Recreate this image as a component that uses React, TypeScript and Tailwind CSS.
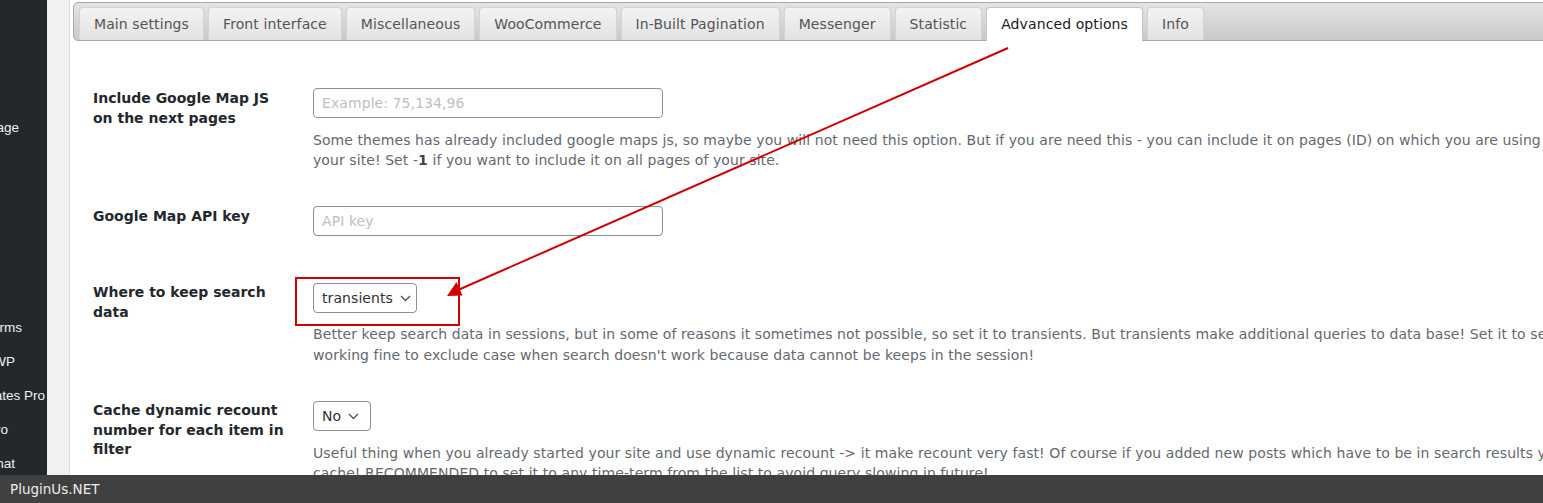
import React from "react";

const tabs = [
  "Main settings",
  "Front interface",
  "Miscellaneous",
  "WooCommerce",
  "In-Built Pagination",
  "Messenger",
  "Statistic",
  "Advanced options",
  "Info",
];

function Chevron() {
  return (
    <svg width="11" height="7" viewBox="0 0 11 7" className="ml-[7px] mt-[1px]">
      <polyline points="1,1 5.5,5.5 10,1" fill="none" stroke="#50575e" strokeWidth="1.4" />
    </svg>
  );
}

function SideItem({ text, pr }: { text: string; pr: string }) {
  return (
    <div className={`h-[34px] flex items-center justify-end overflow-hidden whitespace-nowrap text-[13.5px] font-['Liberation_Sans',sans-serif] text-[#f0f0f1] ${pr}`}>
      <span>{text}</span>
    </div>
  );
}

export default function App() {
  return (
    <div className="relative h-[503px] w-[1543px] overflow-hidden bg-white flex font-['DejaVu_Sans',sans-serif]">
      {/* sidebar */}
      <aside className="w-[47px] shrink-0 bg-[#23282d] flex flex-col pt-[111px]">
        <SideItem text="Manage" pr="pr-[28px]" />
        <div className="h-[166px]" />
        <SideItem text="Forms" pr="pr-[25px]" />
        <SideItem text="WP" pr="pr-[32px]" />
        <SideItem text="Templates Pro" pr="pr-[2px]" />
        <SideItem text="Pro" pr="pr-[39px]" />
        <SideItem text="Chat" pr="pr-[32px]" />
      </aside>
      <div className="w-[23px] shrink-0 bg-[#f1f1f1] border-r border-[#dcdcde]" />

      {/* main */}
      <main className="flex-1 min-w-0 overflow-hidden pt-[2px] pl-[3px] tracking-[0.08px]">
        <div className="h-[39px] mr-[-20px] border border-[#a9a9a9] rounded-[5px] bg-linear-to-b from-[#e4e4e4] to-[#c9c9c9] pl-[5px] flex items-end gap-[4px]">
          {tabs.map((t) =>
            t === "Advanced options" ? (
              <div
                key={t}
                className="relative z-10 h-[34px] mb-[-1px] px-[14px] flex items-center border border-b-0 border-[#c5c5c5] rounded-t-[4px] bg-white text-[14px] text-[#212121] whitespace-nowrap tracking-[0.1px]"
              >
                {t}
              </div>
            ) : (
              <div
                key={t}
                className="h-[33px] px-[14px] flex items-center border border-b-0 border-[#d3d3d3] rounded-t-[4px] bg-linear-to-b from-[#f3f3f3] to-[#e2e2e2] text-[14px] text-[#555555] whitespace-nowrap tracking-[0.1px]"
              >
                {t}
              </div>
            )
          )}
        </div>

        {/* form */}
        <div className="pl-[20px] pt-[47px] flex flex-col text-[14px]">
          {/* row 1 */}
          <div className="flex">
            <div className="w-[200px] mr-[20px] shrink-0 font-bold leading-[20px] text-[#23282d] tracking-normal">
              Include Google Map JS on the next pages
            </div>
            <div className="flex flex-col">
              <input
                className="w-[350px] h-[30px] border border-[#8c8f94] rounded-[4px] px-[8px] text-[14px] text-[#2c3338] placeholder:text-[#c0c0c0] outline-none"
                placeholder="Example: 75,134,96"
              />
              <div className="mt-[12px] leading-[20px] text-[#646970] whitespace-nowrap">
                Some themes has already included google maps js, so maybe you will not need this option. But if you are need this - you can include it on pages (ID) on which you are using
                <br />
                your site! Set -<b className="text-[#3c434a]">1</b> if you want to include it on all pages of your site.
              </div>
            </div>
          </div>

          {/* row 2 */}
          <div className="flex mt-[36px]">
            <div className="w-[200px] mr-[20px] shrink-0 font-bold leading-[20px] text-[#23282d] tracking-normal">
              Google Map API key
            </div>
            <input
              className="w-[350px] h-[30px] border border-[#8c8f94] rounded-[4px] px-[8px] text-[14px] text-[#2c3338] placeholder:text-[#c0c0c0] outline-none"
              placeholder="API key"
            />
          </div>

          {/* row 3 */}
          <div className="flex mt-[47px]">
            <div className="w-[200px] mr-[20px] shrink-0 font-bold leading-[19.5px] text-[#23282d] tracking-normal">
              Where to keep search data
            </div>
            <div className="flex flex-col">
              <div className="self-start h-[30px] w-[104px] border border-[#8c8f94] rounded-[4px] pl-[8px] flex items-center text-[#2c3338]">
                transients
                <Chevron />
              </div>
              <div className="mt-[11px] leading-[20.5px] text-[#646970] whitespace-nowrap">
                Better keep search data in sessions, but in some of reasons it sometimes not possible, so set it to transients. But transients make additional queries to data base! Set it to sessions if your server is
                <br />
                working fine to exclude case when search doesn't work because data cannot be keeps in the session!
              </div>
            </div>
          </div>

          {/* row 4 */}
          <div className="flex mt-[36px]">
            <div className="w-[200px] mr-[20px] shrink-0 font-bold leading-[19.5px] text-[#23282d] tracking-normal">
              Cache dynamic recount number for each item in filter
            </div>
            <div className="flex flex-col">
              <div className="self-start h-[30px] w-[58px] border border-[#8c8f94] rounded-[4px] pl-[8px] flex items-center text-[#2c3338]">
                No
                <Chevron />
              </div>
              <div className="mt-[12px] leading-[20px] text-[#646970] whitespace-nowrap">
                Useful thing when you already started your site and use dynamic recount -&gt; it make recount very fast! Of course if you added new posts which have to be in search results you
                <br />
                cache! RECOMMENDED to set it to any time-term from the list to avoid query slowing in future!
              </div>
            </div>
          </div>
        </div>
      </main>

      {/* annotation overlay */}
      <div className="absolute left-[295px] top-[277px] w-[165px] h-[49px] border-2 border-[#d20000] pointer-events-none" />
      <svg className="absolute left-0 top-0 pointer-events-none" width="1543" height="503">
        <line x1="1008" y1="48" x2="458" y2="290" stroke="#d20000" strokeWidth="2" />
        <polygon points="447,296 462.5,295.5 456.5,282" fill="#d20000" />
      </svg>

      {/* bottom bar */}
      <div className="fixed left-0 right-0 bottom-0 h-[28px] bg-[#404040] flex items-center pl-[10px] text-[13.5px] text-[#ececec]">
        PluginUs.NET
      </div>
    </div>
  );
}
